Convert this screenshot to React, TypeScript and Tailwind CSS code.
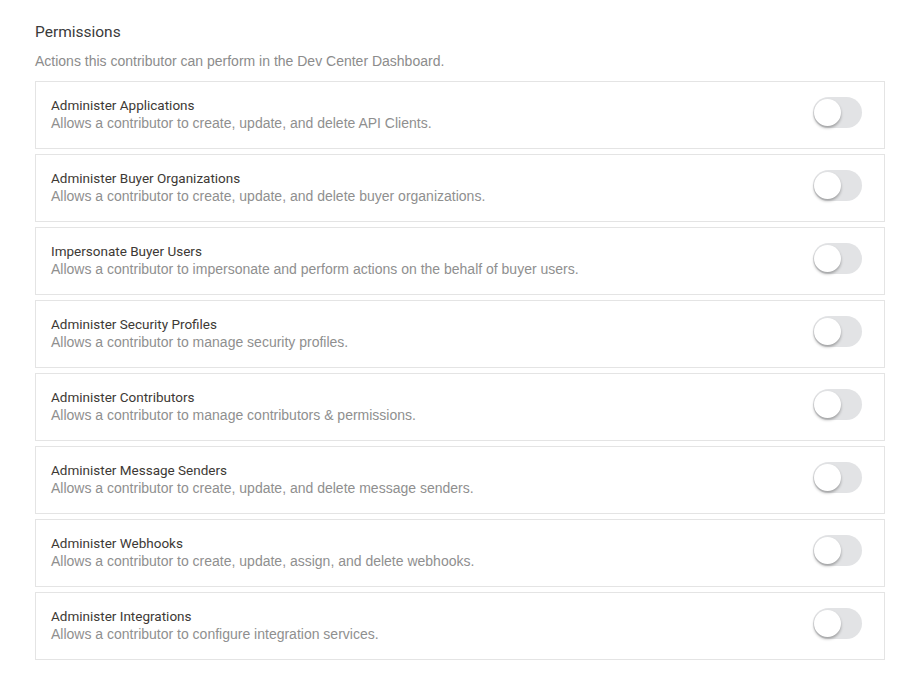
import React from "react";

const perms = [
  ["Administer Applications", "Allows a contributor to create, update, and delete API Clients."],
  ["Administer Buyer Organizations", "Allows a contributor to create, update, and delete buyer organizations."],
  ["Impersonate Buyer Users", "Allows a contributor to impersonate and perform actions on the behalf of buyer users."],
  ["Administer Security Profiles", "Allows a contributor to manage security profiles."],
  ["Administer Contributors", "Allows a contributor to manage contributors & permissions."],
  ["Administer Message Senders", "Allows a contributor to create, update, and delete message senders."],
  ["Administer Webhooks", "Allows a contributor to create, update, assign, and delete webhooks."],
  ["Administer Integrations", "Allows a contributor to configure integration services."],
];

function Toggle() {
  return (
    <div className="relative w-[49px] h-[31px] rounded-full bg-[#e2e3e5] shrink-0 self-start mt-[15px]">
      <div className="absolute left-[1px] top-[2px] w-[27px] h-[27px] rounded-full bg-white shadow-[0_2px_3px_rgba(0,0,0,0.3)]" />
    </div>
  );
}

export default function App() {
  return (
    <div className="bg-white w-[921px] h-[686px] pl-[35px] pr-[36px] pt-[22px]">
      <div className="text-[15.5px] leading-[20px] text-[#3a3a3a] font-['Roboto',sans-serif]">Permissions</div>
      <div className="mt-[9px] text-[14px] leading-[20px] text-[#8c8c8c] font-['Liberation_Sans',Arial,sans-serif]">
        Actions this contributor can perform in the Dev Center Dashboard.
      </div>
      <div className="mt-[10px] flex flex-col gap-[5px]">
        {perms.map(([t, d]) => (
          <div key={t} className="border border-[#e4e4e4] h-[68px] flex items-center justify-between pl-[15px] pr-[22px]">
            <div className="flex flex-col -mt-[2px]">
              <div className="text-[13.5px] leading-[18px] text-[#3d3935] font-['Roboto',sans-serif]">{t}</div>
              <div className="text-[14px] leading-[18px] text-[#8f8f8f] font-['Liberation_Sans',Arial,sans-serif]">{d}</div>
            </div>
            <Toggle />
          </div>
        ))}
      </div>
    </div>
  );
}
